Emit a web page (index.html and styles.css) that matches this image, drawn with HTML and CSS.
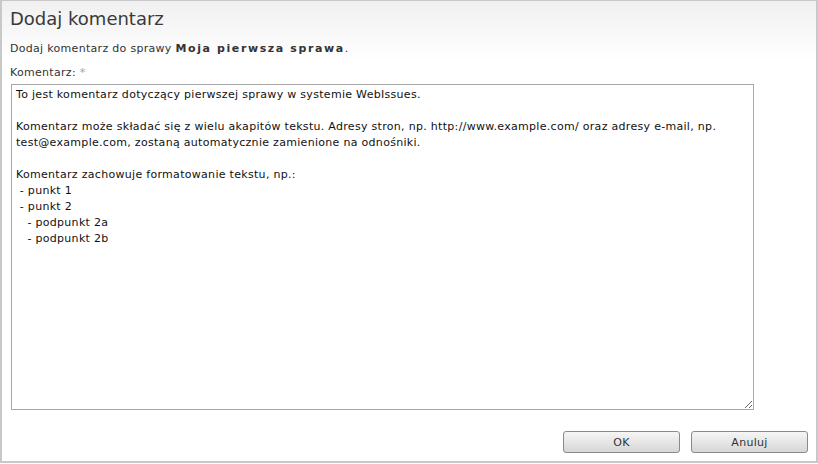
FILE: index.html
```html
<!DOCTYPE html>
<html lang="pl">
<head>
<meta charset="utf-8">
<title>Dodaj komentarz</title>
<link rel="stylesheet" href="styles.css">
</head>
<body>
<div class="dialog">
  <h1 class="title">Dodaj komentarz</h1>
  <p class="intro">Dodaj komentarz do sprawy <strong>Moja pierwsza sprawa</strong>.</p>
  <label class="label" for="comment">Komentarz: <span class="req">*</span></label>
  <textarea id="comment" class="comment">To jest komentarz dotyczący pierwszej sprawy w systemie WebIssues.

Komentarz może składać się z wielu akapitów tekstu. Adresy stron, np. http://www.example.com/ oraz adresy e-mail, np. test@example.com, zostaną automatycznie zamienione na odnośniki.

Komentarz zachowuje formatowanie tekstu, np.:
 - punkt 1
 - punkt 2
   - podpunkt 2a
   - podpunkt 2b</textarea>
  <div class="buttons">
    <button class="btn" type="button">OK</button>
    <button class="btn" type="button">Anuluj</button>
  </div>
</div>
</body>
</html>
```

FILE: styles.css
```css
html, body {
  margin: 0;
  padding: 0;
  background: #ffffff;
}
body {
  width: 818px;
  height: 464px;
  overflow: hidden;
}
.dialog {
  box-sizing: border-box;
  width: 818px;
  height: 463px;
  border: 1px solid #c8c8c8;
  border-width: 1px 2px 2px 2px;
  background: linear-gradient(to bottom, #f0f0f0 0px, #ffffff 60px, #ffffff 100%);
  font-family: "DejaVu Sans", Verdana, sans-serif;
  font-size: 11px;
  letter-spacing: 0.3px;
  color: #333333;
  padding: 0 8px 0 7px;
  display: flex;
  flex-direction: column;
}
.title {
  margin: 6px 0 0 1px;
  font-size: 18px;
  font-weight: normal;
  letter-spacing: 0;
  line-height: 24px;
  color: #3a3a3a;
}
.intro {
  margin: 11px 0 0 1px;
  line-height: 14px;
}
.intro strong {
  font-weight: bold;
  letter-spacing: 1.6px;
}
.label {
  margin: 10px 0 0 1px;
  line-height: 14px;
}
.req {
  color: #a0a0a0;
}
.comment {
  box-sizing: border-box;
  margin: 4px 0 0 2px;
  width: 743px;
  height: 326px;
  border: 1px solid #a8a8a8;
  padding: 2px 4px;
  font-family: "DejaVu Sans", Verdana, sans-serif;
  font-size: 11px;
  letter-spacing: 0.3px;
  line-height: 16px;
  color: #111111;
  background: #ffffff;
  resize: both;
}
.buttons {
  display: flex;
  justify-content: flex-end;
  gap: 11px;
  margin-top: 21px;
}
.btn {
  box-sizing: border-box;
  width: 117px;
  height: 22px;
  border: 1px solid #8a8a8a;
  border-radius: 3px;
  background: linear-gradient(to bottom, #f6f6f6 0%, #e6e6e6 50%, #d6d6d6 100%);
  font-family: "DejaVu Sans", Verdana, sans-serif;
  font-size: 11px;
  letter-spacing: 0.3px;
  color: #333333;
  padding: 0;
}
```
